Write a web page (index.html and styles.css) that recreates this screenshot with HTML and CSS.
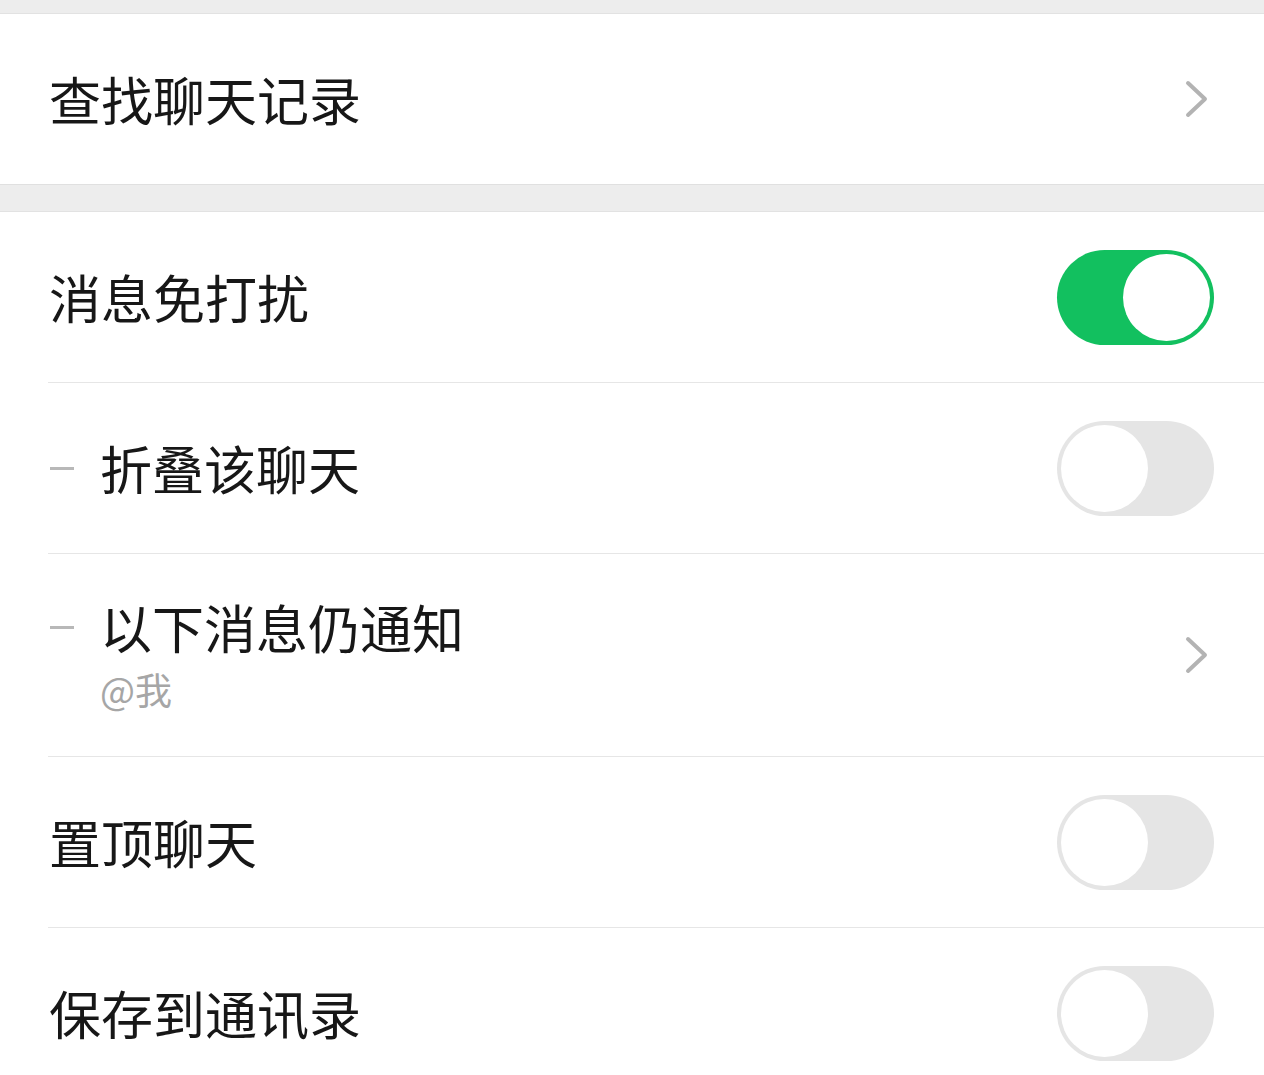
FILE: index.html
```html
<!DOCTYPE html>
<html lang="zh-CN">
<head>
    <meta charset="UTF-8">
    <title>聊天信息</title>
    <link rel="stylesheet" href="styles.css">
</head>
<body>
    <div class="gap gap-top"></div>
    <div class="group">
        <div class="cell">
            <div class="label">查找聊天记录</div>
            <svg class="arrow" viewBox="0 0 26 40"><path d="M4 4 L21 20 L4 36" /></svg>
        </div>
    </div>
    <div class="gap"></div>
    <div class="group">
        <div class="cell">
            <div class="label">消息免打扰</div>
            <div class="switch on"><span class="knob"></span></div>
        </div>
        <div class="cell sub">
            <span class="dash"></span>
            <div class="label">折叠该聊天</div>
            <div class="switch"><span class="knob"></span></div>
        </div>
        <div class="cell sub tall">
            <span class="dash"></span>
            <div class="label">
                <div class="title">以下消息仍通知</div>
                <div class="desc">@我</div>
            </div>
            <svg class="arrow" viewBox="0 0 26 40"><path d="M4 4 L21 20 L4 36" /></svg>
        </div>
        <div class="cell">
            <div class="label">置顶聊天</div>
            <div class="switch"><span class="knob"></span></div>
        </div>
        <div class="cell">
            <div class="label">保存到通讯录</div>
            <div class="switch"><span class="knob"></span></div>
        </div>
    </div>
</body>
</html>
```

FILE: styles.css
```css
body {
    margin: 0;
    background: #fff;
    font-family: "Noto Sans CJK SC", "Noto Sans", sans-serif;
    color: #171717;
}
.gap {
    height: 26px;
    background: #ededed;
    border-top: 1px solid #e0e0e0;
    border-bottom: 1px solid #e2e2e2;
}
.gap-top {
    height: 13px;
    border-top: none;
}
.group {
    background: #fff;
}
.cell {
    display: flex;
    align-items: center;
    height: 170px;
    margin-left: 48px;
    padding-right: 50px;
    border-bottom: 1px solid #e6e6e6;
}
.group .cell:last-child {
    border-bottom: none;
}
.cell.tall {
    height: 202px;
}
.label {
    flex: 1;
    font-size: 52px;
    line-height: 1.2;
    padding-left: 1px;
}
.sub .label {
    padding-left: 26px;
}
.title {
    line-height: 56px;
}
.desc {
    font-size: 37px;
    color: #a6a6a6;
    line-height: 44px;
    margin-top: 12px;
}
.dash {
    width: 24px;
    height: 3px;
    background: #b8b8b8;
    margin-left: 2px;
}
.tall .dash {
    align-self: flex-start;
    margin-top: 72px;
}
.arrow {
    width: 26px;
    height: 40px;
    margin-right: 4px;
}
.arrow path {
    fill: none;
    stroke: #b3b3b3;
    stroke-width: 4;
    stroke-linecap: round;
    stroke-linejoin: round;
}
.switch {
    width: 157px;
    height: 95px;
    border-radius: 48px;
    background: #e5e5e5;
    box-sizing: border-box;
    padding: 4px;
    display: flex;
}
.knob {
    width: 87px;
    height: 87px;
    border-radius: 50%;
    background: #fff;
}
.switch.on {
    background: #12c05f;
    justify-content: flex-end;
}
```
